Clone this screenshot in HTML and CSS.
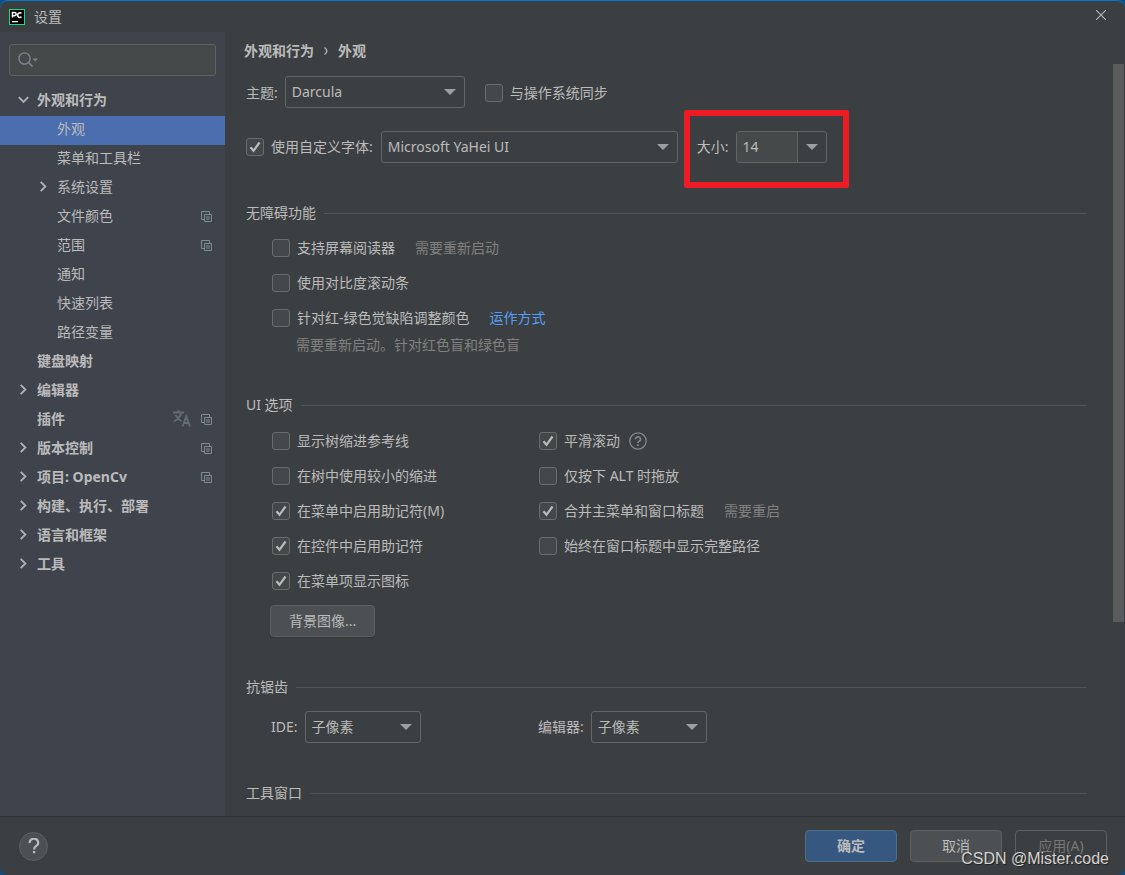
FILE: index.html
```html
<!DOCTYPE html>
<html lang="zh-CN">
<head>
<meta charset="utf-8">
<title>设置</title>
<link rel="stylesheet" href="styles.css">
</head>
<body>
<svg class="defs" aria-hidden="true">
  <symbol id="right" viewBox="0 0 16 16"><path d="M5 3l5 5-5 5" fill="none" stroke="#afb1b3" stroke-width="2"/></symbol>
  <symbol id="down" viewBox="0 0 16 16"><path d="M3 5.500l5 5 5-5" fill="none" stroke="#afb1b3" stroke-width="2"/></symbol>
  <symbol id="tri" viewBox="0 0 12 6"><path d="M0 0h12L6 6z" fill="#9da0a3"/></symbol>
  <symbol id="copy" viewBox="0 0 11 11"><path d="M3 8.500H.5v-8h8V3M3.500 3.500h7v7h-7zM5 6h4M5 8h4" fill="none" stroke="#7f8b91"/></symbol>
</svg>
<div class="window">
  <header class="titlebar">
    <svg class="logo" viewBox="0 0 16 16" role="img" aria-label="PyCharm"><rect width="16" height="16" fill="#21d789"/><rect x="1" y="1" width="14" height="14" fill="#000"/><path d="M3.500 8.500V3.500h2a1.500 1.500 0 0 1 0 3.200h-2M12.500 4.400a2.300 2.300 0 1 0 0 3.400" fill="none" stroke="#fff" stroke-width="1.500"/><path d="M3 12h6v1.200H3z" fill="#fff"/></svg>
    <h1 class="title">设置</h1>
    <button class="close" aria-label="关闭"><svg viewBox="0 0 10 10"><path d="M0 0l10 10M10 0L0 10" stroke="#b4b6b8" stroke-width="1.100"/></svg></button>
  </header>
  <div class="body">
    <aside class="sidebar">
      <label class="search">
        <svg viewBox="0 0 20 16" aria-hidden="true"><circle cx="6.500" cy="6.500" r="5.600" fill="none" stroke="#7c868c" stroke-width="1.400"/><path d="M10.500 10.500l4 4" stroke="#7c868c" stroke-width="1.700"/><path d="M14.500 6.500h5.500L17.200 9.500z" fill="#7c868c"/></svg>
        <input type="text" aria-label="搜索">
      </label>
      <nav class="tree">
        <a class="node top" href="#"><svg class="arrow"><use href="#down"/></svg><span class="name">外观和行为</span></a>
        <a class="node leaf selected" href="#"><span class="name">外观</span></a>
        <a class="node leaf" href="#"><span class="name">菜单和工具栏</span></a>
        <a class="node sub" href="#"><svg class="arrow"><use href="#right"/></svg><span class="name">系统设置</span></a>
        <a class="node leaf" href="#"><span class="name">文件颜色</span><svg class="copy"><use href="#copy"/></svg></a>
        <a class="node leaf" href="#"><span class="name">范围</span><svg class="copy"><use href="#copy"/></svg></a>
        <a class="node leaf" href="#"><span class="name">通知</span></a>
        <a class="node leaf" href="#"><span class="name">快速列表</span></a>
        <a class="node leaf" href="#"><span class="name">路径变量</span></a>
        <a class="node top flat" href="#"><span class="name">键盘映射</span></a>
        <a class="node top" href="#"><svg class="arrow"><use href="#right"/></svg><span class="name">编辑器</span></a>
        <a class="node top flat" href="#"><span class="name">插件</span><svg class="lang" viewBox="0 0 18 17"><path d="M0 2.500h11M5.500 0v2.500M8.500 2.500C7.500 6 4.500 9.500 1 11.500M2.500 5c1.500 3 3.500 4.700 6 6.300M9.500 16.500l3.700-10 3.700 10M10.800 13h4.900" fill="none" stroke="#636b73" stroke-width="1.900"/></svg><svg class="copy"><use href="#copy"/></svg></a>
        <a class="node top" href="#"><svg class="arrow"><use href="#right"/></svg><span class="name">版本控制</span><svg class="copy"><use href="#copy"/></svg></a>
        <a class="node top" href="#"><svg class="arrow"><use href="#right"/></svg><span class="name">项目: OpenCv</span><svg class="copy"><use href="#copy"/></svg></a>
        <a class="node top" href="#"><svg class="arrow"><use href="#right"/></svg><span class="name">构建、执行、部署</span></a>
        <a class="node top" href="#"><svg class="arrow"><use href="#right"/></svg><span class="name">语言和框架</span></a>
        <a class="node top" href="#"><svg class="arrow"><use href="#right"/></svg><span class="name">工具</span></a>
      </nav>
    </aside>
    <main class="content">
      <div class="crumbs"><span>外观和行为</span><svg viewBox="0 0 4 8"><path d="M.5.5Q2.500 2 3 4 2.500 6 .5 7.500" fill="none" stroke="#bbb" stroke-width="1.200"/></svg><span>外观</span></div>
      <div class="row theme">
        <label for="theme">主题:</label>
        <span class="combo medium"><select id="theme"><option>Darcula</option></select><svg><use href="#tri"/></svg></span>
        <label class="check sync"><input type="checkbox">与操作系统同步</label>
      </div>
      <div class="row font">
        <label class="check"><input type="checkbox" checked>使用自定义字体:</label>
        <span class="combo wide"><select aria-label="字体"><option>Microsoft YaHei UI</option></select><svg><use href="#tri"/></svg></span>
        <div class="size">
          <label for="size">大小:</label>
          <span class="spin"><input id="size" type="text" value="14"><button aria-label="选择大小"><svg><use href="#tri"/></svg></button></span>
          <span class="marker"></span>
        </div>
      </div>

      <section class="access">
        <h2>无障碍功能</h2>
        <div class="options">
          <div class="option"><label class="check"><input type="checkbox">支持屏幕阅读器</label><span class="hint">需要重新启动</span></div>
          <div class="option"><label class="check"><input type="checkbox">使用对比度滚动条</label></div>
          <div class="option"><label class="check"><input type="checkbox">针对红-绿色觉缺陷调整颜色</label><a class="link" href="#">运作方式</a></div>
          <p class="note">需要重新启动。针对红色盲和绿色盲</p>
        </div>
      </section>

      <section class="ui">
        <h2>UI 选项</h2>
        <div class="columns">
          <div class="options">
            <div class="option"><label class="check"><input type="checkbox">显示树缩进参考线</label></div>
            <div class="option"><label class="check"><input type="checkbox">在树中使用较小的缩进</label></div>
            <div class="option"><label class="check"><input type="checkbox" checked>在菜单中启用助记符(M)</label></div>
            <div class="option"><label class="check"><input type="checkbox" checked>在控件中启用助记符</label></div>
            <div class="option"><label class="check"><input type="checkbox" checked>在菜单项显示图标</label></div>
          </div>
          <div class="options">
            <div class="option"><label class="check"><input type="checkbox" checked>平滑滚动</label><svg class="info" viewBox="0 0 18 18"><circle cx="9" cy="9" r="8.200" fill="none" stroke="#7f8b91" stroke-width="1.300"/><path d="M6.500 7.200a2.500 2.300 0 1 1 3.700 2C9.300 9.700 9 10 9 11" fill="none" stroke="#7f8b91" stroke-width="1.500"/><path d="M8.200 12.300h1.600v1.600H8.200z" fill="#7f8b91"/></svg></div>
            <div class="option"><label class="check"><input type="checkbox">仅按下 ALT 时拖放</label></div>
            <div class="option"><label class="check"><input type="checkbox" checked>合并主菜单和窗口标题</label><span class="hint">需要重启</span></div>
            <div class="option"><label class="check"><input type="checkbox">始终在窗口标题中显示完整路径</label></div>
          </div>
        </div>
        <button class="btn image">背景图像...</button>
      </section>

      <section class="alias">
        <h2>抗锯齿</h2>
        <div class="columns">
          <div class="pair"><label for="ide">IDE:</label><span class="combo small"><select id="ide"><option>子像素</option></select><svg><use href="#tri"/></svg></span></div>
          <div class="pair"><label for="editor">编辑器:</label><span class="combo small"><select id="editor"><option>子像素</option></select><svg><use href="#tri"/></svg></span></div>
        </div>
      </section>

      <section class="tools"><h2>工具窗口</h2></section>
    </main>
    <div class="track"><div class="thumb"></div></div>
  </div>
  <footer class="footer">
    <button class="help" aria-label="帮助"><svg viewBox="0 0 12 16"><path d="M1.800 5A4.200 3.900 0 1 1 8.300 7.800C6.700 8.900 6 9.500 6 11.500" fill="none" stroke="#bbb" stroke-width="2.200"/><path d="M4.900 13h2.300v2.300H4.900z" fill="#bbb"/></svg></button>
    <div class="actions">
      <button class="btn primary">确定</button>
      <button class="btn">取消</button>
      <button class="btn" disabled>应用(A)</button>
    </div>
  </footer>
  <div class="watermark">CSDN @Mister.code</div>
</div>
</body>
</html>
```
FILE: styles.css
```css
* { box-sizing: border-box; }
body {
  margin: 0;
  background: #0d4f85;
  color: #bbbbbb;
  font: 14px/20px "Noto Sans", "Noto Sans CJK SC", sans-serif;
}
button, input, select { font: inherit; color: inherit; margin: 0; }
a { color: inherit; text-decoration: none; }
svg { display: block; flex: none; }
.defs { position: absolute; width: 0; height: 0; }

.window {
  position: relative;
  display: flex;
  flex-direction: column;
  height: 100vh;
  background: #3c3f41;
  border-top: 1px solid #0078d4;
  border-radius: 8px;
  overflow: hidden;
}
.titlebar { display: flex; align-items: center; height: 31px; flex: none; padding: 0 18px 0 9px; }
.logo { width: 16px; height: 16px; }
.title { margin: 0 auto 0 9px; font-size: 14px; font-weight: 400; }
.close { padding: 0; border: 0; background: none; }
.close svg { width: 12px; height: 12px; padding: 1px; margin-bottom: 3px; }

.body { display: flex; flex: 1; min-height: 0; }

.sidebar { width: 225px; flex: none; background: #3f434c; padding-top: 12px; }
.search {
  display: flex;
  align-items: center;
  height: 32px;
  margin: 0 9px 11px;
  padding-left: 8px;
  background: #45494a;
  border: 1px solid #5e6162;
  border-radius: 3px;
}
.search svg { width: 20px; height: 16px; }
.search input { flex: 1; min-width: 0; border: 0; background: none; outline: 0; }
.node { display: flex; align-items: center; height: 29px; padding-right: 13px; padding-bottom: 4px; }
.node .name { margin-right: auto; }
.top { padding-left: 16px; font-weight: 700; }
.flat { padding-left: 37px; }
.sub { padding-left: 36px; }
.leaf { padding-left: 57px; }
.selected { background: #4b6eaf; }
.arrow { width: 15px; height: 15px; margin-right: 6px; }
.copy { width: 11px; height: 11px; margin-top: 2px; }
.lang { width: 18px; height: 17px; margin-right: 10px; }

.content { flex: 1; min-width: 0; overflow: hidden; padding: 9px 26px 0 21px; white-space: nowrap; }
.crumbs { display: flex; align-items: center; gap: 10px; margin-left: -2px; font-weight: 700; }
.crumbs svg { width: 4px; height: 8px; }
.row { display: flex; align-items: center; }
.theme { margin-top: 15px; gap: 7px; }
.theme label { padding-top: 1px; }
.font { margin-top: 23px; gap: 8px; }
.sync { margin-left: 13px; }

.check { display: flex; align-items: center; gap: 7px; }
.check input {
  appearance: none;
  width: 18px;
  height: 18px;
  background: #43494a;
  border: 1px solid #6b6b6b;
  border-radius: 3px;
}
.check input:checked {
  background: #43494a url("data:image/svg+xml,%3Csvg xmlns='http://www.w3.org/2000/svg' viewBox='0 0 16 16'%3E%3Cpath d='M3.500 8.200l3 3.600L12.500 3.500' fill='none' stroke='%23bbb' stroke-width='2.200'/%3E%3C/svg%3E") center / 16px;
}

.combo { display: grid; align-items: center; }
.combo select {
  grid-area: 1 / 1;
  appearance: none;
  width: 100%;
  height: 32px;
  padding: 0 6px;
  background: #3c3f41;
  border: 1px solid #646464;
  border-radius: 3px;
}
.combo svg { grid-area: 1 / 1; justify-self: end; margin-right: 9px; pointer-events: none; }
.combo svg, .spin svg { width: 12px; height: 6px; }
.medium { width: 180px; }
.wide { width: 297px; }
.small { width: 116px; }

.size { position: relative; display: flex; align-items: center; gap: 7px; margin-left: 11px; }
.spin { display: flex; width: 91px; height: 32px; border: 1px solid #646464; border-radius: 3px; }
.spin input { flex: 1; min-width: 0; padding: 0 6px; border: 0; background: #45494a; }
.spin button { width: 29px; padding: 0 8px; border: 0; border-left: 1px solid #646464; background: none; }
.marker { position: absolute; inset: -21px -22px -25px -13px; border: 6px solid #ed1c24; border-radius: 2px; }

h2 { display: flex; align-items: center; gap: 8px; margin: 0; font-size: 14px; font-weight: 400; }
h2::after { content: ""; flex: 1; height: 1px; background: #515456; }
.access { margin-top: 40px; }
.access .options { padding-top: 7px; }
.ui .columns { padding-top: 8px; }
.options { padding-left: 26px; }
.option { display: flex; align-items: center; gap: 20px; height: 35px; }
.hint, .note { color: #808080; }
.note { margin: 0 0 0 24px; }
.link { color: #589df6; }
.info { width: 18px; height: 18px; margin-left: -11px; }
.ui { margin-top: 40px; }
.columns { display: grid; grid-template-columns: 267px 1fr; }

.btn {
  height: 32px;
  min-width: 92px;
  padding: 0 18px;
  background: #4c5052;
  border: 1px solid #5e6060;
  border-radius: 4px;
}
.image { display: block; margin: 7px 0 0 24px; box-shadow: 0 1px 1px #35383a; }
.primary { background: #365880; border-color: #4c708c; font-weight: 700; }
.btn:disabled { background: none; color: #777777; }
.alias { margin-top: 40px; }
.alias .columns { padding: 14px 0 0 25px; }
.pair { display: flex; align-items: center; gap: 7px; }
.tools { margin-top: 40px; }

.track { width: 12px; flex: none; padding: 32px 1px 0 0; }
.thumb { height: calc(100% - 194px); background: #595b5d; }

.footer {
  display: flex;
  align-items: center;
  justify-content: space-between;
  height: 59px;
  flex: none;
  padding: 0 18px 0 19px;
  border-top: 1px solid #323232;
}
.help {
  display: grid;
  place-items: center;
  width: 29px;
  height: 29px;
  padding: 0;
  background: #4c5052;
  border: 1px solid #5e6060;
  border-radius: 50%;
}
.help svg { width: 12px; height: 16px; }
.actions { display: flex; gap: 13px; }
.watermark {
  position: absolute;
  right: 16px;
  bottom: 6px;
  color: #d4d4d4;
  font: 16px/20px "Liberation Sans", Arial, sans-serif;
  text-shadow: 1px 1px 1px #222;
}
```
